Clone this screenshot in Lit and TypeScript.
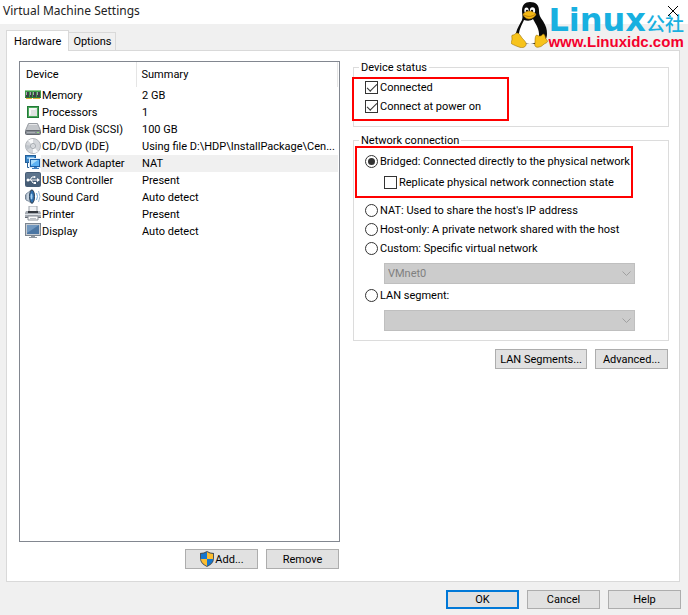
import { LitElement, html, css, svg } from "lit";
import { customElement } from "lit/decorators.js";
import { classMap } from "lit/directives/class-map.js";

const icon = (body: unknown) =>
  html`<svg class="icon" viewBox="0 0 16 16" aria-hidden="true">${body}</svg>`;

const icons: Record<string, unknown> = {
  memory: icon(svg`
    <rect x="0" y="3" width="16" height="8" fill="#3d9a48"/>
    <rect x="0" y="3" width="16" height="1" fill="#8fd093"/>
    <rect x="1" y="5" width="3" height="5" fill="#3c4046"/><rect x="5" y="5" width="2" height="5" fill="#3c4046"/>
    <rect x="8" y="5" width="3" height="5" fill="#3c4046"/><rect x="12" y="5" width="3" height="5" fill="#3c4046"/>
    <path d="M1 5h1v3h-1zM5 5h1v3h-1zM8 5h1v3h-1zM12 5h1v3h-1z" fill="#a4a9ae"/>
    <path d="M1 11h6v1H1zM8 11h7v1H8z" fill="#e0ae3a"/>
    <path d="M0 10h16v1H0z" fill="#2a7a36"/>`),
  cpu: icon(svg`
    <rect x="2" y="2" width="12" height="12" fill="#237a38"/>
    <rect x="3" y="3" width="10" height="10" fill="#4aa95a"/>
    <rect x="4" y="4" width="8" height="8" fill="#dfe2e0"/>
    <path d="M4 12V4h8L10 6H6v4z" fill="#f7f8f7"/>`),
  disk: icon(svg`
    <path d="M3.500 2.500h9L15.500 9.500H.500z" fill="#c3c6ca" stroke="#999da3"/>
    <path d="M4 3.500h8" stroke="#e6e7e9"/>
    <rect x=".5" y="9.500" width="15" height="4" rx="1" fill="#868c94" stroke="#62676e"/>
    <path d="M2 11.500h8" stroke="#a9aeb4"/><rect x="12" y="11" width="2" height="1" fill="#8fe07c"/>`),
  cd: icon(svg`
    <circle cx="8" cy="8" r="7.500" fill="#d3d6da" stroke="#b0b4b9"/>
    <path d="M8 8L3 2.500A7 7 0 0 1 8 1zM8 8l5 5.500A7 7 0 0 1 8 15z" fill="#f8f9fa"/>
    <path d="M8 8L1 7a7 7 0 0 0 1 5z" fill="#bfc4ca"/>
    <circle cx="8" cy="8" r="2.500" fill="#e9ebee" stroke="#a3a8ae"/><circle cx="8" cy="8" r="1" fill="#fff" stroke="#a5abb2" stroke-width=".5"/>`),
  network: icon(svg`
    <rect x=".5" y=".5" width="10" height="7" fill="#3b86c8" stroke="#245f98"/>
    <path d="M2 2h7v2H2z" fill="#8cc2ec"/>
    <path d="M2.500 8v4.500H5" fill="none" stroke="#245f98"/>
    <rect x="4.500" y="3.500" width="11" height="9" fill="#2f7fd0" stroke="#dcebf8"/>
    <rect x="5.500" y="4.500" width="9" height="7" fill="#5db2f3" stroke="#1c5fa6"/>
    <path d="M6 5h7L6 10z" fill="#a9dcfb"/>
    <path d="M9 12h3v1h2v1H7v-1h2z" fill="#3f7fc0"/>`),
  usb: icon(svg`
    <rect x="0" y="0" width="16" height="15" rx="2" fill="#465d76"/>
    <rect x="1" y="1" width="14" height="6" rx="1" fill="#5d748c"/>
    <path d="M2 8h10M5 8l2-3h2M6 8l2 3h2" fill="none" stroke="#fff"/>
    <circle cx="3" cy="8" r="1.500" fill="#fff"/><path d="M12 6l3 2-3 2z" fill="#fff"/>
    <circle cx="9.500" cy="5" r="1" fill="#fff"/><rect x="9" y="10" width="2" height="2" fill="#fff"/>`),
  sound: icon(svg`
    <path d="M0 6l2-1v6L0 10z" fill="#6c7784"/>
    <path d="M1 5Q4 3 6 1q3-1 3 7t-3 6Q4 12 1 11z" fill="#c4d0dc" stroke="#7f8fa1"/>
    <ellipse cx="7" cy="7.500" rx="2.500" ry="6.500" fill="#2c6eae" stroke="#32465c"/>
    <ellipse cx="6.500" cy="7.500" rx="1" ry="3" fill="#a4d2f4"/>
    <path d="M11.500 4q2 3.500 0 7" fill="none" stroke="#6fa9da"/>
    <path d="M13.500 2q3 5.500 0 11" fill="none" stroke="#9db9d2"/>`),
  printer: icon(svg`
    <rect x="4" y="0" width="8" height="6" fill="#f4f5f7" stroke="#9aa0a7"/>
    <path d="M1 5h14l1 2v5H0V7z" fill="#a5abb3"/>
    <path d="M3 5h10v2H3z" fill="#35393f"/>
    <path d="M0 8h16v1H0z" fill="#dfe2e6"/>
    <path d="M0 11h16v1H0z" fill="#666c75"/>
    <path d="M3 10h10v4H3z" fill="#fbfbfc" stroke="#8a9098"/><path d="M5 12.500h6" stroke="#b9bec4"/>`),
  display: icon(svg`
    <rect x=".5" y=".5" width="15" height="12" fill="#c7ccd2" stroke="#7b8590"/>
    <rect x="2" y="2" width="12" height="9" fill="#4c76a3"/>
    <path d="M2 2h12L2 10z" fill="#7298bf"/>
    <path d="M6 13h4v1h2v1H4v-1h2z" fill="#8e969f"/>`),
};

const devices = [
  ["memory", "Memory", "2 GB"],
  ["cpu", "Processors", "1"],
  ["disk", "Hard Disk (SCSI)", "100 GB"],
  ["cd", "CD/DVD (IDE)", "Using file D:\\HDP\\InstallPackage\\Cen..."],
  ["network", "Network Adapter", "NAT"],
  ["usb", "USB Controller", "Present"],
  ["sound", "Sound Card", "Auto detect"],
  ["printer", "Printer", "Present"],
  ["display", "Display", "Auto detect"],
];

const penguin = html`<svg class="tux" viewBox="0 0 37 46" aria-hidden="true">
  <path d="M19 0c6 0 9 3 9 9 0 4 1 6 4 10 3 5 4 8 4 13 0 5-3 8-6 10H9c-4-2-5-6-4-11 1-5 4-9 6-13 1-3 0-6 0-9 0-6 3-9 8-9z" fill="#0b0b0b"/>
  <path d="M13 18c3 1 7 1 9-1 2 4 6 9 6 15 0 6-3 10-9 10-6 0-9-3-11-9 0-6 3-10 5-15z" fill="#fff"/>
  <ellipse cx="15.500" cy="8.500" rx="2.200" ry="3" fill="#fff"/><ellipse cx="21.500" cy="8.500" rx="2.600" ry="3.200" fill="#fff"/>
  <circle cx="16" cy="9" r="1.200" fill="#111"/><circle cx="21" cy="9" r="1.200" fill="#111"/>
  <path d="M12 12c2-2 4-3 6-3 3 0 6 2 7 3 0 2-4 5-7 5s-6-3-6-5z" fill="#f5b915" stroke="#a26c05" stroke-width=".5"/>
  <path d="M13 13c4 2 7 2 11-.5" fill="none" stroke="#9a6204" stroke-width=".7"/>
  <path d="M6 31c2 0 3 2 5 5 2 2 5 5 4 7-1 3-5 3-7 2-3-1-5-2-7-3-2-1 0-3 0-5s-1-4 1-4 2-2 4-2z" fill="#f7c31c" stroke="#9e7206" stroke-width=".6"/>
  <path d="M26 33c2 2 5 1 6-1 2 0 2 3 3 5 2 2 2 3 0 4-3 1-4 4-7 4-3 1-5-1-4-4 0-3 0-8 2-8z" fill="#f7c31c" stroke="#9e7206" stroke-width=".6"/>
</svg>`;

@customElement("app-root")
export class AppRoot extends LitElement {
  static styles = css`
    :host {
      display: flex;
      flex-direction: column;
      position: relative;
      box-sizing: border-box;
      min-height: 100vh;
      padding-bottom: 6px;
      background: #f0f0f0;
      color: #000;
      font: 11px/15px Roboto, "DejaVu Sans", sans-serif;
    }
    * { box-sizing: border-box; }
    button, select { font: inherit; color: inherit; margin: 0; border-radius: 0; }
    .titlebar {
      display: flex;
      align-items: center;
      justify-content: space-between;
      height: 24px;
      padding: 0 9px 2px 3px;
      background: #fff;
    }
    h1 {
      margin: 0;
      font: 400 12px/20px "Noto Sans", sans-serif;
      color: #222;
    }
    .close {
      position: relative;
      z-index: 2;
      display: flex;
      padding: 0;
      border: 0;
      background: none;
    }
    .close svg { width: 12px; height: 12px; }
    .tabs {
      display: flex;
      align-items: flex-end;
      padding: 6px 6px 0;
    }
    .tab {
      height: 18px;
      padding: 0 4px;
      border: 1px solid #d9d9d9;
      border-width: 1px 1px 0 0;
      background: #f0f0f0;
    }
    .tab.active {
      position: relative;
      height: 21px;
      margin-bottom: -1px;
      padding: 0 7px;
      border-left-width: 1px;
      background: #fff;
    }
    .panel {
      flex: 1;
      display: grid;
      grid-template-columns: 321fr 316fr;
      gap: 13px;
      margin: 0 8px 0 6px;
      padding: 9px 10px 12px 12px;
      border: 1px solid #d9d9d9;
      background: #fff;
    }
    .left { display: flex; flex-direction: column; min-width: 0; padding-top: 1px; }
    .listbox { flex: 1; border: 1px solid #828790; padding-right: 1px; }
    table { width: 100%; border-collapse: collapse; table-layout: fixed; }
    th, td { padding: 0; text-align: left; font-weight: 400; line-height: 17px; white-space: nowrap; }
    th { height: 25px; padding-left: 6px; }
    .name-col { width: 116px; }
    .head-cell { border-right: 1px solid #e5e5e5; border-left: 1px solid #e5e5e5; padding-left: 5px; }
    .device { display: flex; height: 17px; padding-left: 5px; }
    .device span { flex: 1; padding-left: 1px; }
    .summary { padding-left: 6px; }
    .selected span, .selected .summary { background: #f0f0f0; }
    .icon { width: 16px; height: 16px; }
    .buttons { display: flex; justify-content: flex-end; gap: 8px; padding-top: 7px; }
    .btn {
      display: flex;
      align-items: center;
      justify-content: center;
      min-width: 73px;
      height: 20px;
      padding: 0 4px;
      border: 1px solid #adadad;
      background: #e1e1e1;
      white-space: nowrap;
    }
    .left .buttons { padding-right: 1px; }
    .btn.primary { border: 2px solid #0078d7; }
    .shield { width: 16px; height: 16px; }
    .right { min-width: 0; }
    fieldset { min-width: 0; margin: 0; padding: 0; border: 1px solid #dcdcdc; }
    legend { height: 15px; margin-left: 5px; padding: 0 2px; }
    .status { margin-bottom: 6px; }
    .mark { display: grid; border: 2px solid #f00; }
    .status .mark { width: 157px; gap: 2px; margin: 2px 0 5px -2px; padding: 0 0 4px 11px; }
    .network .mark { width: 278px; gap: 4px; margin: -2px 0 4px 1px; padding: 5px 0 5px 8px; }
    .network { padding-bottom: 9px; }
    .options { display: grid; gap: 2px; padding-left: 11px; }
    label { display: flex; align-items: center; height: 17px; gap: 2px; white-space: nowrap; }
    .indent { margin-left: 19px; }
    input {
      appearance: none;
      flex: none;
      display: grid;
      place-items: center;
      width: 13px;
      height: 13px;
      margin: 0;
      border: 1px solid #333;
      background: #fff;
    }
    input[type="radio"] { border-radius: 50%; }
    input[type="radio"]:checked::before {
      content: "";
      width: 7px;
      height: 7px;
      border-radius: 50%;
      background: #333;
    }
    input[type="checkbox"]:checked::before {
      content: "";
      width: 9px;
      height: 4px;
      border: solid #333;
      border-width: 0 0 1px 1px;
      transform: translateY(-1px) rotate(-45deg);
    }
    .combo { display: grid; align-items: center; margin: 6px 33px 0 30px; }
    .combo select, .combo svg { grid-area: 1 / 1; }
    .combo svg { justify-self: end; width: 9px; height: 5px; margin-right: 4px; }
    select {
      appearance: none;
      width: 100%;
      height: 21px;
      padding: 0 3px;
      border: 1px solid #bfbfbf;
      background: #ccc;
    }
    select:disabled { color: #808080; opacity: 1; }
    .lan { padding: 3px 0 0 11px; }
    .right .buttons { padding: 8px 1px 0 0; }
    .footer { padding: 8px 7px 0 0; }
    .footer .btn { height: 19px; }
    .brand {
      position: absolute;
      top: 2px;
      right: 4px;
      display: flex;
      align-items: flex-start;
      pointer-events: none;
    }
    .tux { width: 37px; height: 46px; }
    .words { display: grid; padding-top: 4px; }
    .logo {
      display: flex;
      align-items: baseline;
      height: 28px;
      color: #18b0e0;
      font: 700 32px/28px "DejaVu Sans", sans-serif;
    }
    .cjk { font: 500 19px/28px "Noto Sans CJK SC", sans-serif; }
    .site { color: #f4002c; font: 700 15px/16px "Liberation Sans", sans-serif; }
  `;

  private combo(name: string, value: string) {
    return html`<div class="combo">
      <select disabled aria-label=${name}><option>${value}</option></select>
      <svg viewBox="0 0 9 5" aria-hidden="true"><path d="M.5.500l4 4 4-4" fill="none" stroke="#a0a0a0"/></svg>
    </div>`;
  }

  render() {
    return html`
      <header class="titlebar">
        <h1>Virtual Machine Settings</h1>
        <button class="close" aria-label="Close">
          <svg viewBox="0 0 12 12"><path d="M1 1l10 10M11 1L1 11" stroke="#000" fill="none"/></svg>
        </button>
      </header>
      <nav class="tabs" role="tablist">
        <button class="tab active" role="tab" aria-selected="true">Hardware</button>
        <button class="tab" role="tab" aria-selected="false">Options</button>
      </nav>
      <main class="panel">
        <div class="left">
          <div class="listbox">
            <table>
              <thead><tr><th class="name-col">Device</th><th class="head-cell">Summary</th></tr></thead>
              <tbody>
                ${devices.map(([key, name, summary]) => html`
                  <tr class=${classMap({ selected: key === "network" })}>
                    <td><div class="device">${icons[key]}<span>${name}</span></div></td>
                    <td class="summary">${summary}</td>
                  </tr>`)}
              </tbody>
            </table>
          </div>
          <div class="buttons">
            <button class="btn">
              <svg class="shield" viewBox="0 0 16 16" aria-hidden="true">
                <path d="M8 0q3 2 7 2v5q0 6-7 9-7-3-7-9V2q4 0 7-2z" fill="#4b5157"/>
                <path d="M8 1v7H2V3q3 0 6-2z" fill="#1476cf"/><path d="M8 1v7h6V3q-3 0-6-2z" fill="#fcbd30"/>
                <path d="M2 8h6v7Q2 12 2 8z" fill="#fcbd30"/><path d="M14 8H8v7q6-3 6-7z" fill="#1476cf"/>
              </svg>Add...</button>
            <button class="btn">Remove</button>
          </div>
        </div>
        <div class="right">
          <fieldset class="status">
            <legend>Device status</legend>
            <div class="mark">
              <label><input type="checkbox" checked>Connected</label>
              <label><input type="checkbox" checked>Connect at power on</label>
            </div>
          </fieldset>
          <fieldset class="network">
            <legend>Network connection</legend>
            <div class="mark">
              <label><input type="radio" name="net" checked>Bridged: Connected directly to the physical network</label>
              <label class="indent"><input type="checkbox">Replicate physical network connection state</label>
            </div>
            <div class="options">
              <label><input type="radio" name="net">NAT: Used to share the host's IP address</label>
              <label><input type="radio" name="net">Host-only: A private network shared with the host</label>
              <label><input type="radio" name="net">Custom: Specific virtual network</label>
            </div>
            ${this.combo("Virtual network", "VMnet0")}
            <div class="lan"><label><input type="radio" name="net">LAN segment:</label></div>
            ${this.combo("LAN segment", "")}
          </fieldset>
          <div class="buttons">
            <button class="btn">LAN Segments...</button>
            <button class="btn">Advanced...</button>
          </div>
        </div>
      </main>
      <footer class="buttons footer">
        <button class="btn primary">OK</button>
        <button class="btn">Cancel</button>
        <button class="btn">Help</button>
      </footer>
      <div class="brand">
        ${penguin}
        <div class="words">
          <div class="logo">Linux<span class="cjk">公社</span></div>
          <div class="site">www.Linuxidc.com</div>
        </div>
      </div>
    `;
  }
}
